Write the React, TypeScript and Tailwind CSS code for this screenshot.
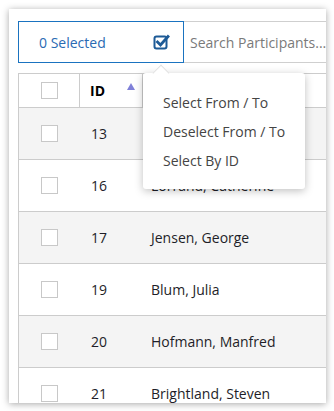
import React from "react";

const rows = [
  { id: 13, name: "" },
  { id: 16, name: "Lorrand, Catherine" },
  { id: 17, name: "Jensen, George" },
  { id: 19, name: "Blum, Julia" },
  { id: 20, name: "Hofmann, Manfred" },
  { id: 21, name: "Brightland, Steven" },
];

function Box() {
  return <div className="w-[17px] h-[17px] border border-[#c8c8c8] bg-white" />;
}

function CheckIcon() {
  return (
    <svg width="18" height="18" viewBox="0 0 18 18" fill="none">
      <rect x="1.5" y="3.5" width="12" height="12" rx="2" stroke="#1d5a96" strokeWidth="2" />
      <path d="M4.5 9 L7.5 12 L15 3.5" stroke="#1d5a96" strokeWidth="2.8" strokeLinecap="square" />
    </svg>
  );
}

export default function App() {
  return (
    <div className="w-[334px] h-[411px] bg-white overflow-hidden pt-[9px] pl-[9px] font-['Open_Sans',sans-serif] text-[14px]">
      <div className="relative w-[317px] h-[394px] bg-white shadow-[0_1px_7px_rgba(0,0,0,0.35)]">
        <div className="h-full overflow-hidden pl-[9px] pt-[12px]">
          <div className="flex h-[42px]">
            <div className="w-[166px] border border-[#1a73c0] flex items-center justify-between pl-[20px] pr-[12px] text-[#2a6ab3]">
              <span>0 Selected</span>
              <CheckIcon />
            </div>
            <div className="flex-1 border-y border-[#cfcfcf] flex items-center pl-[6px] text-[#7a7a7a] whitespace-nowrap overflow-hidden">
              Search Participants...
            </div>
          </div>
          <div className="mt-[10px] border-l border-t border-[#cccccc] text-[#1e1e28]">
            <div className="flex h-[34px] border-b border-[#cccccc] bg-white">
              <div className="w-[61px] border-r border-[#cccccc] flex items-center justify-center">
                <Box />
              </div>
              <div className="w-[63px] border-r border-[#cccccc] flex items-center pl-[10px] relative">
                <span className="font-bold text-black">ID</span>
                <svg className="absolute left-[47px] top-[9px]" width="8" height="7" viewBox="0 0 8 7">
                  <path d="M4 0 L8 7 L0 7 Z" fill="#7f80d8" />
                </svg>
              </div>
              <div className="flex-1" />
            </div>
            {rows.map((r, i) => (
              <div
                key={r.id}
                className={`flex h-[52px] border-b border-[#cccccc] items-center ${i % 2 === 0 ? "bg-[#f4f4f4]" : "bg-white"}`}
              >
                <div className="w-[61px] flex justify-center">
                  <Box />
                </div>
                <div className="w-[63px] pl-[11px]">{r.id}</div>
                <div className="flex-1 pl-[8px] whitespace-nowrap">{r.name}</div>
              </div>
            ))}
          </div>
        </div>

        <div className="absolute left-[134px] top-[64px] w-[162px] h-[116px] bg-white rounded-[3px] shadow-[0_2px_8px_rgba(0,0,0,0.25)] pt-[15px] pl-[20px] text-[#444]">
          <div className="absolute left-[12px] top-[-6px] w-[12px] h-[12px] bg-white rotate-45 border-l border-t border-[#e2e2e2]" />
          <div className="h-[29px] flex items-center">Select From / To</div>
          <div className="h-[29px] flex items-center">Deselect From / To</div>
          <div className="h-[29px] flex items-center">Select By ID</div>
        </div>
      </div>
    </div>
  );
}
